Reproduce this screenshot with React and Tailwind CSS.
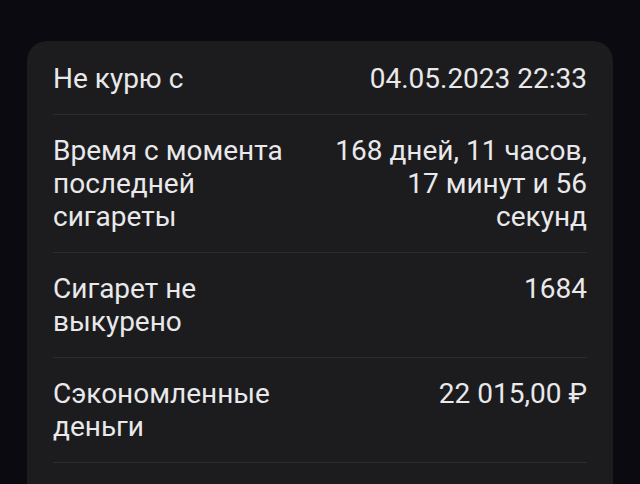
import React from 'react';

const rows = [
  { label: 'Не курю с', value: '04.05.2023 22:33' },
  { label: 'Время с момента последней сигареты', value: '168 дней, 11 часов, 17 минут и 56 секунд' },
  { label: 'Сигарет не выкурено', value: '1684' },
  { label: 'Сэкономленные деньги', value: '22 015,00 ₽' },
];

function StatRow({ label, value }) {
  return (
    <div className="grid grid-cols-2 gap-4 border-b border-[#2c2c2e] py-[19px]">
      <p className="text-left">{label}</p>
      <p className="text-right">{value}</p>
    </div>
  );
}

export default function App() {
  return (
    <div
      className="min-h-[484px] overflow-hidden bg-[#0b0a10] px-[27px] pt-[41px] text-[28px] leading-[33px] text-[#e9e9eb]"
      style={{ fontFamily: 'Roboto, "Noto Sans", sans-serif' }}
    >
      <div className="rounded-t-[20px] bg-[#1c1c1e] px-[26px] pt-[2px] pb-[40px]">
        {rows.map((row) => (
          <StatRow key={row.label} {...row} />
        ))}
      </div>
    </div>
  );
}
